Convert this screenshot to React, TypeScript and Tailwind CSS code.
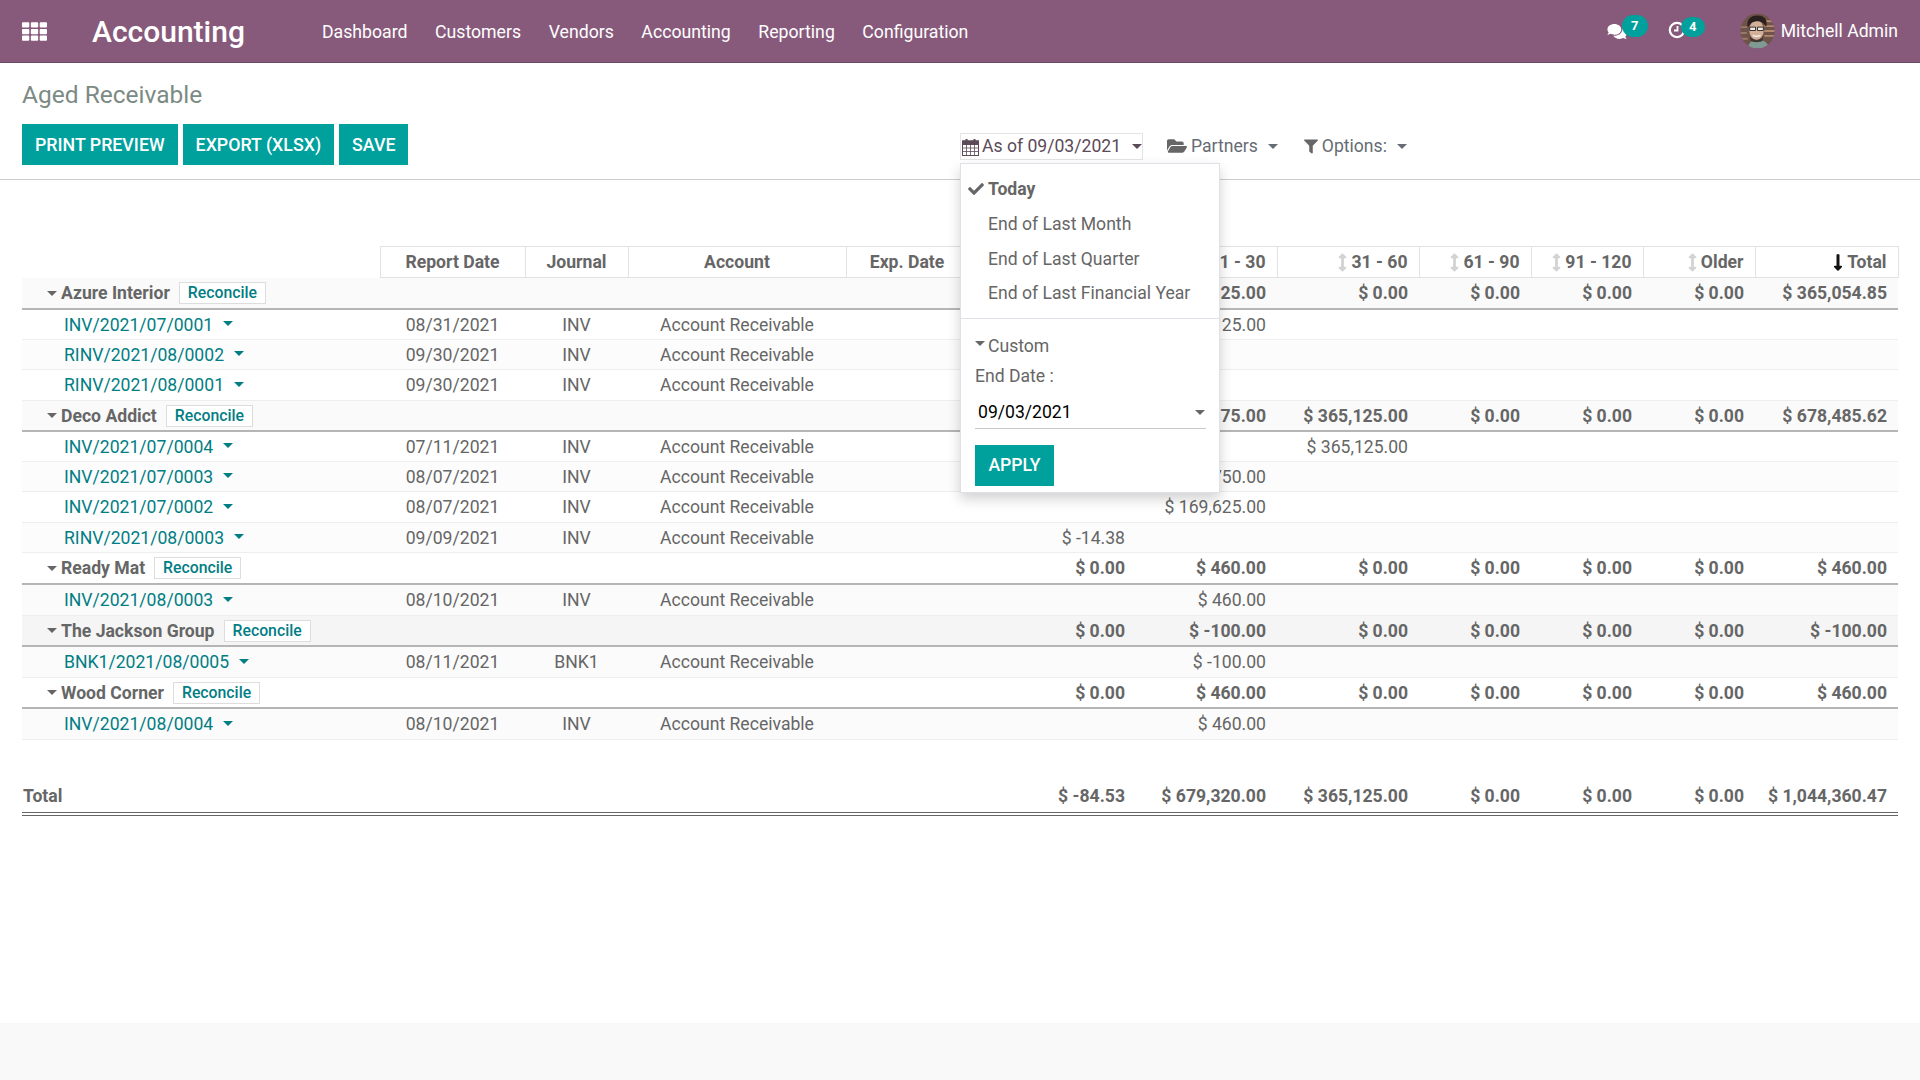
import { FaTh, FaComments, FaFolderOpen, FaFilter, FaCheck, FaArrowsAltV, FaLongArrowAltDown } from 'react-icons/fa'

const Caret = ({ className = '' }: { className?: string }) => (
  <span className={`inline-block w-0 h-0 border-x-[5px] border-t-[5px] border-x-transparent border-t-current ${className}`} />
)

type Row = {
  group?: boolean
  name: string
  date?: string
  journal?: string
  account?: string
  values?: string[]
  h: string
  bg: string
}

const ACC = 'Account Receivable'

const rows: Row[] = [
  { group: true, name: 'Azure Interior', values: ['', '$ 365,125.00', '$ 0.00', '$ 0.00', '$ 0.00', '$ 0.00', '$ 365,054.85'], h: 'h-[31px]', bg: 'bg-[#fafafa]' },
  { name: 'INV/2021/07/0001', date: '08/31/2021', journal: 'INV', account: ACC, values: ['', '$ 365,125.00', '', '', '', '', ''], h: 'h-[31px]', bg: 'bg-white' },
  { name: 'RINV/2021/08/0002', date: '09/30/2021', journal: 'INV', account: ACC, values: ['', '', '', '', '', '', ''], h: 'h-[30px]', bg: 'bg-[#fcfcfc]' },
  { name: 'RINV/2021/08/0001', date: '09/30/2021', journal: 'INV', account: ACC, values: ['', '', '', '', '', '', ''], h: 'h-[31px]', bg: 'bg-white' },
  { group: true, name: 'Deco Addict', values: ['', '$ 313,375.00', '$ 365,125.00', '$ 0.00', '$ 0.00', '$ 0.00', '$ 678,485.62'], h: 'h-[30px]', bg: 'bg-[#fafafa]' },
  { name: 'INV/2021/07/0004', date: '07/11/2021', journal: 'INV', account: ACC, values: ['', '', '$ 365,125.00', '', '', '', ''], h: 'h-[31px]', bg: 'bg-white' },
  { name: 'INV/2021/07/0003', date: '08/07/2021', journal: 'INV', account: ACC, values: ['', '$ 143,750.00', '', '', '', '', ''], h: 'h-[30px]', bg: 'bg-[#fcfcfc]' },
  { name: 'INV/2021/07/0002', date: '08/07/2021', journal: 'INV', account: ACC, values: ['', '$ 169,625.00', '', '', '', '', ''], h: 'h-[31px]', bg: 'bg-white' },
  { name: 'RINV/2021/08/0003', date: '09/09/2021', journal: 'INV', account: ACC, values: ['$ -14.38', '', '', '', '', '', ''], h: 'h-[30px]', bg: 'bg-[#fcfcfc]' },
  { group: true, name: 'Ready Mat', values: ['$ 0.00', '$ 460.00', '$ 0.00', '$ 0.00', '$ 0.00', '$ 0.00', '$ 460.00'], h: 'h-[31px]', bg: 'bg-white' },
  { name: 'INV/2021/08/0003', date: '08/10/2021', journal: 'INV', account: ACC, values: ['', '$ 460.00', '', '', '', '', ''], h: 'h-[32px]', bg: 'bg-[#fbfbfb]' },
  { group: true, name: 'The Jackson Group', values: ['$ 0.00', '$ -100.00', '$ 0.00', '$ 0.00', '$ 0.00', '$ 0.00', '$ -100.00'], h: 'h-[30px]', bg: 'bg-[#f5f5f5]' },
  { name: 'BNK1/2021/08/0005', date: '08/11/2021', journal: 'BNK1', account: ACC, values: ['', '$ -100.00', '', '', '', '', ''], h: 'h-[32px]', bg: 'bg-[#fbfbfb]' },
  { group: true, name: 'Wood Corner', values: ['$ 0.00', '$ 460.00', '$ 0.00', '$ 0.00', '$ 0.00', '$ 0.00', '$ 460.00'], h: 'h-[30px]', bg: 'bg-white' },
  { name: 'INV/2021/08/0004', date: '08/10/2021', journal: 'INV', account: ACC, values: ['', '$ 460.00', '', '', '', '', ''], h: 'h-[32px]', bg: 'bg-[#fbfbfb]' },
]

const totals = ['$ -84.53', '$ 679,320.00', '$ 365,125.00', '$ 0.00', '$ 0.00', '$ 0.00', '$ 1,044,360.47']

const menus = ['Dashboard', 'Customers', 'Vendors', 'Accounting', 'Reporting', 'Configuration']
const sortCols = ['31 - 60', '61 - 90', '91 - 120', 'Older']

const Avatar = () => (
  <svg viewBox="0 0 36 36" className="w-[35px] h-[36px]">
    <defs>
      <clipPath id="av"><ellipse cx="18" cy="18" rx="17.5" ry="18" /></clipPath>
    </defs>
    <g clipPath="url(#av)">
      <rect width="36" height="36" fill="#6f5248" />
      <path d="M25 8h11M25 13h11M25 18h11M25 23h11" stroke="#b48a6c" strokeWidth="2" />
      <path d="M0 14h8M0 20h7M0 26h8" stroke="#9a7a66" strokeWidth="2" />
      <path d="M8 36c1-7 5-9 10-9s11 2 12 9z" fill="#7f9a93" />
      <ellipse cx="17" cy="17" rx="7.5" ry="10" fill="#d3b09a" />
      <path d="M8 15C6 5 12 2 18 2s11 3 9 12c-2-4-5-6-9-6s-8 2-10 7z" fill="#2a211e" />
      <path d="M10 14h6v3.5h-6zM18 14h6v3.5h-6z" fill="#f1ece6" stroke="#332b29" strokeWidth="1" />
      <path d="M13 22.5c3 1.5 5 1.5 8 0" stroke="#f5f0ea" strokeWidth="1.5" fill="none" />
      <path d="M10 23c3 6 11 6 14 0l-1 5c-3 2-9 2-12 0z" fill="#3f342e" />
    </g>
  </svg>
)

const CalendarIcon = () => (
  <svg viewBox="0 0 17 18" className="w-[17px] h-[18px] mr-[3px]" fill="none" stroke="currentColor">
    <rect x="0.5" y="3" width="16" height="14.5" strokeWidth="1" />
    <rect x="0.5" y="3" width="16" height="3.5" fill="currentColor" strokeWidth="1" />
    <path d="M4.5 1v4M12.5 1v4" strokeWidth="2" />
    <path d="M4.5 7v10M8.5 7v10M12.5 7v10M1 10h15M1 13.5h15" strokeWidth="0.8" />
  </svg>
)

const App = () => (
  <div className="min-h-screen h-screen flex flex-col bg-white text-[17.6px] text-[#666666] font-['Roboto',sans-serif]">
    {/* navbar */}
    <header className="h-[63px] shrink-0 bg-[#875a7b] border-b border-[#6d4a64] text-white flex items-center px-[22px]">
      <FaTh preserveAspectRatio="none" className="w-[25px] h-[21px]" />
      <span className="ml-[45px] pt-[2px] text-[30px] font-medium leading-none">Accounting</span>
      <nav className="ml-[77px] pt-[2px] flex gap-[27.5px] text-[17.7px]">
        {menus.map(m => <span key={m}>{m}</span>)}
      </nav>
      <div className="ml-auto flex items-center">
        <div className="relative w-[41px] h-[36px] mr-[20px]">
          <FaComments className="absolute left-0 top-[10px] w-[20px] h-[17px]" />
          <span className="absolute left-[15px] top-[2px] w-[26px] h-[22px] rounded-full bg-[#00a09d] text-[13px] font-bold flex items-center justify-center">7</span>
        </div>
        <div className="relative w-[37px] h-[36px] mr-[35px]">
          <svg viewBox="0 0 18 18" className="absolute left-0 top-[8px] w-[18px] h-[18px]" fill="none" stroke="white">
            <circle cx="9" cy="9" r="7.2" strokeWidth="2.2" />
            <path d="M9.5 5v4.5H6" strokeWidth="1.8" />
          </svg>
          <span className="absolute left-[13px] top-[4px] w-[24px] h-[20px] rounded-full bg-[#00a09d] text-[13px] font-bold flex items-center justify-center">4</span>
        </div>
        <Avatar />
        <span className="ml-[6px] pt-[1px]">Mitchell Admin</span>
      </div>
    </header>

    {/* control panel */}
    <section className="shrink-0 px-[22px] border-b border-[#cccccc] h-[117px]">
      <h1 className="pt-[16px] text-[24.5px] leading-[32px] text-[#7c8a84]">Aged Receivable</h1>
      <div className="grid grid-cols-2 mt-[13px]">
        <div className="flex gap-[5px]">
          {['PRINT PREVIEW', 'EXPORT (XLSX)', 'SAVE'].map(b => (
            <button key={b} className="h-[41px] px-[13px] pt-[1px] bg-[#00a09d] text-white text-[17.8px] font-medium">{b}</button>
          ))}
        </div>
        <div className="flex items-center h-[41px] pt-[4px]">
          <div className="relative">
            <div className="flex items-center h-[27px] w-[183px] pl-[1px] border border-[#e4e4e4] text-[#5b4a57] font-normal">
              <CalendarIcon />
              <span>As of 09/03/2021</span>
              <Caret className="ml-auto" />
            </div>
            {/* dropdown */}
            <div className="absolute z-10 left-0 top-[30px] w-[260px] h-[330px] bg-white border border-[#dee2e6] shadow-[0_6px_12px_rgba(0,0,0,0.18)]">
              <div className="pt-[8px]">
                <div className="relative h-[35px] pl-[27px] flex items-center font-bold">
                  <FaCheck className="absolute left-[6px] top-[9px] w-[18px] h-[16px]" />
                  Today
                </div>
                <div className="h-[35px] pl-[27px] flex items-center">End of Last Month</div>
                <div className="h-[34px] pl-[27px] flex items-center">End of Last Quarter</div>
                <div className="h-[35px] pl-[27px] flex items-center">End of Last Financial Year</div>
              </div>
              <div className="mt-[7px] border-t border-[#dee2e6] pl-[14px] pr-[13px]">
                <div className="flex items-center h-[27px] mt-[14px]">
                  <Caret className="mr-[3px] -mt-[6px]" />
                  Custom
                </div>
                <div className="h-[27px] mt-[3px] flex items-center">End Date :</div>
                <div className="mt-[7px] h-[32px] border-b border-[#c8c8c8] flex items-center justify-between pl-[3px] pr-[1px] text-black">
                  09/03/2021
                  <Caret className="text-[#666666]" />
                </div>
                <button className="mt-[16px] w-[79px] h-[41px] bg-[#00a09d] text-white font-medium">APPLY</button>
              </div>
            </div>
          </div>
          <div className="ml-[24px] flex items-center text-[#666c74]">
            <FaFolderOpen className="w-[20px] h-[18px] mr-[4px] text-[#666666]" />
            Partners
            <Caret className="ml-[10px]" />
          </div>
          <div className="ml-[26px] flex items-center text-[#666c74]">
            <FaFilter className="w-[14px] h-[15px] mr-[4px] text-[#666666]" />
            Options:
            <Caret className="ml-[10px]" />
          </div>
        </div>
      </div>
    </section>

    {/* report */}
    <main className="flex-1 px-[22px] pt-[66px]">
      <table className="w-[1876px] table-fixed border-collapse">
        <colgroup>
          <col className="w-[358px]" />
          <col className="w-[145px]" />
          <col className="w-[103px]" />
          <col className="w-[218px]" />
          <col className="w-[122px]" />
          <col className="w-[168px]" />
          <col className="w-[141px]" />
          <col className="w-[142px]" />
          <col className="w-[112px]" />
          <col className="w-[112px]" />
          <col className="w-[112px]" />
          <col className="w-[143px]" />
        </colgroup>
        <thead>
          <tr className="h-[31px] font-bold [&>th]:pt-[1px]">
            <th />
            <th className="border border-[#e2e2e2] font-bold">Report Date</th>
            <th className="border border-[#e2e2e2] font-bold">Journal</th>
            <th className="border border-[#e2e2e2] font-bold">Account</th>
            <th className="border border-[#e2e2e2] font-bold">Exp. Date</th>
            <th className="border border-[#e2e2e2]" />
            <th className="border border-[#e2e2e2] font-bold text-right pr-[11px]">1 - 30</th>
            {sortCols.map(c => (
              <th key={c} className="border border-[#e2e2e2] font-bold pr-[11px]">
                <span className="flex items-center justify-end">
                  <FaArrowsAltV className="w-[9px] h-[19px] mr-[4px] text-[#d3d3d3]" />
                  {c}
                </span>
              </th>
            ))}
            <th className="border border-[#e2e2e2] font-bold pr-[11px]">
              <span className="flex items-center justify-end">
                <FaLongArrowAltDown className="w-[10px] h-[19px] mr-[4px] text-[#111111]" />
                Total
              </span>
            </th>
          </tr>
        </thead>
        <tbody>
          {rows.map(r => r.group ? (
            <tr key={r.name} className={`${r.h} ${r.bg} border-b-2 border-[#b5b5b5] font-bold [&>td]:pt-[1px]`}>
              <td colSpan={5}>
                <div className="flex items-center pl-[25px]">
                  <Caret className="text-[#666666] mr-[4px]" />
                  <span>{r.name}</span>
                  <span className="ml-[9px] h-[22px] px-[8px] border border-[#dddddd] bg-white text-[15.8px] leading-[20px] font-medium text-[#017e84]">Reconcile</span>
                </div>
              </td>
              {r.values?.map((v, i) => <td key={i} className="text-right pr-[11px]">{v}</td>)}
            </tr>
          ) : (
            <tr key={r.name} className={`${r.h} ${r.bg} border-b border-[#eeeeee] [&>td]:pt-[1px]`}>
              <td className="pl-[42px] text-[#017e84]">
                <span className="inline-flex items-center">
                  {r.name}
                  <Caret className="ml-[10px] -mt-[2px]" />
                </span>
              </td>
              <td className="text-center">{r.date}</td>
              <td className="text-center">{r.journal}</td>
              <td className="text-center">{r.account}</td>
              <td />
              {r.values?.map((v, i) => <td key={i} className="text-right pr-[11px]">{v}</td>)}
            </tr>
          ))}
          <tr className="h-[41px]"><td colSpan={12} /></tr>
          <tr className="h-[33px] font-bold border-b-4 border-double border-[#666666] [&>td]:pt-[1px]">
            <td colSpan={5} className="pl-[1px]">Total</td>
            {totals.map((v, i) => <td key={i} className="text-right pr-[11px]">{v}</td>)}
          </tr>
        </tbody>
      </table>
    </main>

    <footer className="h-[57px] shrink-0 bg-[#f9f9f9]" />
  </div>
)

export default App
